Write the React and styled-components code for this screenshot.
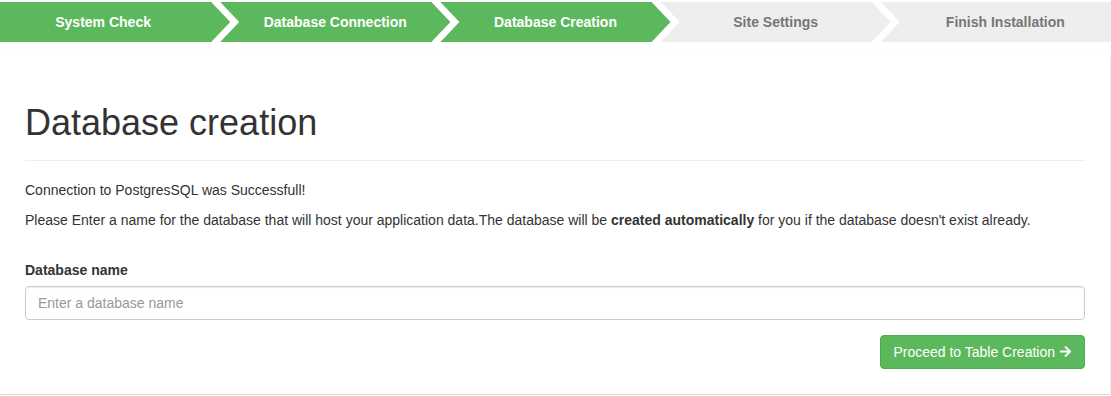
import React from "react";
import styled, { createGlobalStyle } from "styled-components";
import { FaArrowRight } from "react-icons/fa";

// --------------------------------------------------

const GlobalStyle = createGlobalStyle`
	body {
		margin: 0;
		background: #fff;
		font-family: "Liberation Sans", Arial, sans-serif;
		font-size: 14px;
		line-height: 20px;
		color: #333;
	}
	* { box-sizing: border-box; }
`;

const ARROW = 19;
const OVERLAP = 10;

const Steps = styled.ol`
	display: flex;
	list-style: none;
	margin: 2px 0 0;
	padding: 0;
	height: 40px;
`;

const Step = styled.li`
	flex: none;
	width: calc((100% + ${ 4 * OVERLAP }px) / 5);
	display: flex;
	align-items: center;
	justify-content: center;
	margin-left: ${ props => (props.first ? 0 : -OVERLAP) }px;
	padding-left: ${ props => (props.first ? 0 : ARROW) }px;
	padding-right: ${ props => (props.last ? 0 : props.first ? ARROW + 5 : ARROW) }px;
	background: ${ props => (props.done ? "#5cb85c" : "#eeeeee") };
	color: ${ props => (props.done ? "#fff" : "#777") };
	font-weight: bold;
	font-size: 14px;
	white-space: nowrap;
	clip-path: ${ props =>
		`polygon(0 0, ${ props.last ? "100%" : `calc(100% - ${ ARROW }px)` } 0, 100% 50%, ${
			props.last ? "100%" : `calc(100% - ${ ARROW }px)`
		} 100%, 0 100%, ${ props.first ? "0" : `${ ARROW }px` } 50%)` };
`;

const Card = styled.div`
	margin: 14px 1px 1px 0;
	padding: 27px 25px 25px;
	background: #fff;
	box-shadow: 0 1px 2px rgba(0, 0, 0, 0.22);
`;

const Header = styled.div`
	margin: 20px 0 19px;
	padding-bottom: 17px;
	border-bottom: 1px solid #eee;
`;

const Title = styled.h1`
	margin: 0;
	font-size: 36px;
	font-weight: 500;
	line-height: 1.1;
	color: #333;
`;

const Text = styled.p`
	margin: 0 0 10px;
`;

const Group = styled.div`
	margin-top: 30px;
	display: flex;
	flex-direction: column;
`;

const Label = styled.label`
	font-weight: bold;
	margin-bottom: 6px;
`;

const Input = styled.input`
	height: 34px;
	padding: 6px 12px;
	font-family: inherit;
	font-size: 14px;
	color: #555;
	border: 1px solid #ccc;
	border-radius: 4px;
	box-shadow: inset 0 1px 1px rgba(0, 0, 0, 0.075);
	&::placeholder { color: #999; }
`;

const Actions = styled.div`
	display: flex;
	justify-content: flex-end;
	margin-top: 15px;
`;

const Button = styled.button`
	display: inline-flex;
	align-items: center;
	gap: 4px;
	height: 34px;
	padding: 6px 12px;
	font-family: inherit;
	font-size: 14px;
	color: #fff;
	background: #5cb85c;
	border: 1px solid #4cae4c;
	border-radius: 4px;
	cursor: pointer;
`;

// --------------------------------------------------

const steps = [
	{ label: "System Check", done: true },
	{ label: "Database Connection", done: true },
	{ label: "Database Creation", done: true },
	{ label: "Site Settings", done: false },
	{ label: "Finish Installation", done: false },
];

const App = () => (
	<>
		<GlobalStyle />
		<Steps>
			{ steps.map((s, i) => (
				<Step
					key={ s.label }
					done={ s.done }
					first={ i === 0 }
					last={ i === steps.length - 1 }
				>
					{ s.label }
				</Step>
			)) }
		</Steps>

		<Card>
			<Header>
				<Title>Database creation</Title>
			</Header>
			<Text>Connection to PostgresSQL was Successfull!</Text>
			<Text>
				Please Enter a name for the database that will host your application
				data.The database will be <b>created automatically</b> for you if the
				database doesn't exist already.
			</Text>
			<Group>
				<Label htmlFor="dbname">Database name</Label>
				<Input id="dbname" placeholder="Enter a database name" />
			</Group>
			<Actions>
				<Button>
					Proceed to Table Creation <FaArrowRight size={ 13 } />
				</Button>
			</Actions>
		</Card>
	</>
);

export default App;
